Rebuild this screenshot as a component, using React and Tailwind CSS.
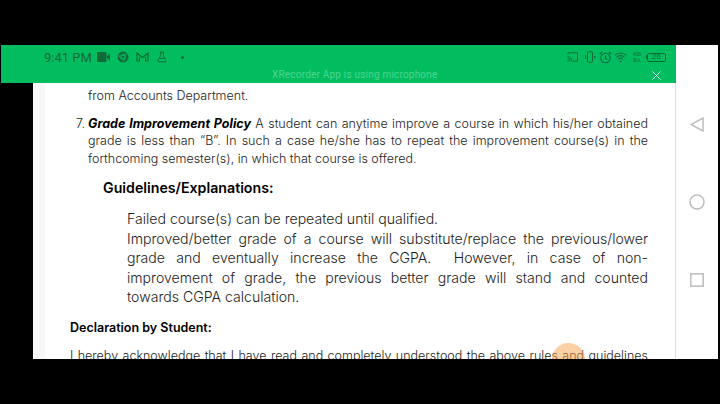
const bodyFont = "font-['Inter','Liberation_Sans',sans-serif]";
const justLine = "text-justify [text-align-last:justify]";

function StatusIcons() {
  return (
    <div className="flex items-center text-[#0f6b3a]">
      <svg width="13" height="10" viewBox="0 0 13 10" fill="currentColor">
        <rect x="0" y="0" width="9.5" height="10" rx="1" />
        <path d="M10 4 L13 1.5 V8.5 L10 6 Z" />
      </svg>
      <svg className="ml-[7px]" width="12" height="12" viewBox="0 0 12 12">
        <circle cx="6" cy="6" r="5.5" fill="currentColor" />
        <circle cx="6" cy="6" r="2.2" fill="none" stroke="#02bd60" strokeWidth="1.2" />
        <path d="M6 3.2 H11 M3.6 7.5 L1.5 3.5 M8.4 7.5 L5.5 11.5" stroke="#02bd60" strokeWidth="0.8" />
      </svg>
      <svg className="ml-[7px]" width="13" height="10" viewBox="0 0 13 10" fill="none" stroke="currentColor" strokeWidth="1.2">
        <path d="M1 9 V1 L6.5 5.5 L12 1 V9 M1 9 H3.5 V5 M12 9 H9.5 V5" />
      </svg>
      <svg className="ml-[8px]" width="10" height="12" viewBox="0 0 11 12" fill="none" stroke="currentColor" strokeWidth="1">
        <path d="M3 .7 H8 M4 .7 V4.5 L.9 10 Q.5 11.3 1.8 11.3 H9.2 Q10.5 11.3 10.1 10 L7 4.5 V.7 M2.6 7.5 H8.4" />
      </svg>
      <span className="ml-[14px] w-[3px] h-[3px] rounded-full bg-current" />
    </div>
  );
}

function SystemIcons() {
  return (
    <div className="flex items-center text-[#0f6b3a]">
      <svg width="11" height="10" viewBox="0 0 11 10" fill="none" stroke="currentColor" strokeWidth="1">
        <path d="M1 2.5 V.8 H10.4 V9.2 H5.5 M.6 4.5 A4.5 4.5 0 0 1 4.8 9.2 M.6 6.3 A2.8 2.8 0 0 1 3 9.2" />
        <circle cx="1" cy="8.8" r=".7" fill="currentColor" stroke="none" />
      </svg>
      <svg className="ml-[7px]" width="11" height="12" viewBox="0 0 11 12" fill="none" stroke="currentColor" strokeWidth="1">
        <rect x="2.5" y=".7" width="5" height="10.6" rx="1" />
        <path d="M.7 4 V8 M9 5 L10.5 6 L9 7" />
      </svg>
      <svg className="ml-[3px]" width="13" height="13" viewBox="0 0 13 13" fill="none" stroke="currentColor" strokeWidth="1.1">
        <circle cx="6.5" cy="7" r="4.7" />
        <path d="M6.5 4.4 V7.2 L8.3 8.2 M.8 3 L3 1 M12.2 3 L10 1" />
      </svg>
      <svg className="ml-[2px]" width="13" height="11" viewBox="0 0 13 11" fill="none" stroke="currentColor" strokeWidth="1.2">
        <path d="M.7 3.4 A8.2 8.2 0 0 1 12.3 3.4 M2.6 5.3 A5.5 5.5 0 0 1 10.4 5.3 M4.4 7.2 A3 3 0 0 1 8.6 7.2" />
        <circle cx="6.5" cy="9.4" r="1" fill="currentColor" stroke="none" />
      </svg>
      <div className="ml-[6px] flex flex-col items-center text-[5px] leading-[6px] font-['Liberation_Sans',sans-serif]">
        <span>458</span>
        <span>B/s</span>
      </div>
      <div className="ml-[5px] flex items-center">
        <span className="w-[1px] h-[4px] bg-current" />
        <div className="w-[19px] h-[9px] border border-current rounded-[2px] flex items-center justify-center text-[8px] leading-none font-['Liberation_Sans',sans-serif]">
          26
        </div>
      </div>
    </div>
  );
}

function GreenBar() {
  return (
    <div className="ml-[1px] h-[38px] shrink-0 bg-[#02bd60] pl-[43px] pr-[10px] pt-[4px] relative z-10">
      <div className="flex items-center justify-between h-[16px]">
        <div className="flex items-center gap-[5px]">
          <span className="text-[13px] leading-none text-[#0f6b3a] font-['Roboto',sans-serif]">9:41 PM</span>
          <StatusIcons />
        </div>
        <SystemIcons />
      </div>
      <div className="flex items-center justify-end mt-[4px] h-[12px] relative">
        <span className="absolute left-[228px] text-[10px] leading-none tracking-[0.2px] text-[#4dd68f] font-['Roboto',sans-serif]">
          XRecorder App is using microphone
        </span>
        <svg className="mr-[5px]" width="9" height="9" viewBox="0 0 9 9" stroke="#e8fff2" strokeWidth="1">
          <path d="M.5 .5 L8.5 8.5 M8.5 .5 L.5 8.5" />
        </svg>
      </div>
    </div>
  );
}

function Document() {
  return (
    <div className={`flex-1 min-h-0 overflow-hidden bg-white border-r border-[#dddddd] relative text-[12.5px] leading-[17.5px] text-[#1c1c1c] font-light ${bodyFont}`}>
      <div className="absolute left-0 top-0 bottom-0 w-[12px] bg-[#f8f8f8]" />
      <div className="pl-[55px] pr-[27px] pt-[4px]">
        <p>from Accounts Department.</p>
        <div className="mt-[10px] flex -ml-[12px]">
          <span className="w-[12px] shrink-0">7.</span>
          <div className="flex-1 min-w-0">
            <p className={justLine}>
              <b className="font-bold italic text-black">Grade Improvement Policy</b> A student can anytime improve a course in which his/her obtained
            </p>
            <p className={justLine}>grade is less than “B”. In such a case he/she has to repeat the improvement course(s) in the</p>
            <p>forthcoming semester(s), in which that course is offered.</p>
          </div>
        </div>
        <h3 className="mt-[11px] ml-[15px] text-[14.2px] leading-[20px] font-semibold text-black">Guidelines/Explanations:</h3>
        <div className="mt-[11px] ml-[39px] text-[14.1px] leading-[19.5px]">
          <p>Failed course(s) can be repeated until qualified.</p>
          <p className={justLine}>Improved/better grade of a course will substitute/replace the previous/lower</p>
          <p className={justLine}>grade and eventually increase the CGPA. &nbsp;However, in case of non-</p>
          <p className={justLine}>improvement of grade, the previous better grade will stand and counted</p>
          <p>towards CGPA calculation.</p>
        </div>
      </div>
      <div className="pl-[37px] pr-[27px] mt-[12px]">
        <h4 className="text-[12.5px] leading-[17px] font-semibold text-black">Declaration by Student:</h4>
        <p className={`mt-[11px] ${justLine}`}>
          I hereby acknowledge that I have read and completely understood the above rules and guidelines
        </p>
      </div>
      <span className="absolute left-[519px] top-[260px] w-[33px] h-[33px] rounded-full bg-[#f7a14a]/50" />
    </div>
  );
}

function NavButtons() {
  return (
    <div className="w-[42px] bg-white flex flex-col items-center pt-[72px] gap-[62px]">
      <svg width="14" height="15" viewBox="0 0 14 15" fill="none" stroke="#bdbdbd" strokeWidth="1.5">
        <path d="M13 1 V14 L1 7.5 Z" />
      </svg>
      <svg width="16" height="16" viewBox="0 0 16 16" fill="none" stroke="#bdbdbd" strokeWidth="1.5">
        <circle cx="8" cy="8" r="7" />
      </svg>
      <svg className="mt-[1px]" width="14" height="14" viewBox="0 0 14 14" fill="none" stroke="#bdbdbd" strokeWidth="1.5">
        <rect x=".8" y=".8" width="12.4" height="12.4" />
      </svg>
    </div>
  );
}

export default function App() {
  return (
    <div className="w-[720px] h-[404px] bg-black overflow-hidden pt-[45px] pr-[2px]">
      <div className="flex h-[314px]">
        <div className="w-[676px] flex flex-col">
          <GreenBar />
          <div className="flex-1 min-h-0 ml-[33px] flex flex-col">
            <Document />
          </div>
        </div>
        <NavButtons />
      </div>
    </div>
  );
}
